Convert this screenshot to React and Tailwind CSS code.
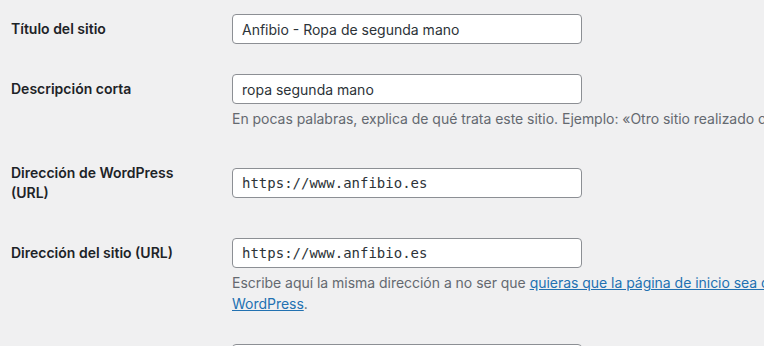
import React from 'react';

// Ajustes generales de WordPress (fragmento)
const FONT = { fontFamily: 'Inter, "Noto Sans", "Liberation Sans", sans-serif' };

const TextField = ({ value, mono = false }) => (
  <input
    type="text"
    defaultValue={value}
    className={`block w-[350px] h-[30px] px-[9px] bg-white border border-[#8c8f94] rounded-[4px] text-[14px] text-[#2c3338] outline-none ${
      mono ? 'font-["DejaVu_Sans_Mono","Liberation_Mono",monospace]' : ''
    }`}
  />
);

const Label = ({ children, className = '' }) => (
  <div className={`w-[221px] shrink-0 pr-[21px] text-[14px] leading-[20px] font-semibold text-[#1d2327] ${className}`}>
    {children}
  </div>
);

const Description = ({ children }) => (
  <p className="mt-[4px] text-[14px] leading-[21px] text-[#646970] whitespace-nowrap tracking-[-0.03px]">{children}</p>
);

export default function App() {
  return (
    <div className="h-[346px] w-[764px] overflow-hidden bg-[#f0f0f1] pl-[11px] pt-[14px]" style={FONT}>
      {/* Título */}
      <div className="flex items-start">
        <Label className="mt-[5px]">Título del sitio</Label>
        <TextField value="Anfibio - Ropa de segunda mano" />
      </div>

      {/* Descripción */}
      <div className="flex items-start mt-[30px]">
        <Label className="mt-[5px]">Descripción corta</Label>
        <div>
          <TextField value="ropa segunda mano" />
          <Description>
            En pocas palabras, explica de qué trata este sitio. Ejemplo: «Otro sitio realizado con WordPress».
          </Description>
        </div>
      </div>

      {/* Dirección de WordPress */}
      <div className="flex items-start mt-[34px]">
        <Label>Dirección de WordPress (URL)</Label>
        <div className="mt-[5px]">
          <TextField value="https://www.anfibio.es" mono />
        </div>
      </div>

      {/* Dirección del sitio */}
      <div className="flex items-start mt-[35px]">
        <Label className="mt-[5px]">Dirección del sitio (URL)</Label>
        <div>
          <TextField value="https://www.anfibio.es" mono />
          <Description>
            Escribe aquí la misma dirección a no ser que{' '}
            <a href="#" className="text-[#2271b1] underline">
              quieras que la página de inicio sea distinta del directorio de instalación de
              <br />
              WordPress
            </a>
            .
          </Description>
        </div>
      </div>

      {/* Siguiente campo (cortado por el borde inferior) */}
      <div className="flex items-start mt-[30px]">
        <Label />
        <TextField value="" />
      </div>
    </div>
  );
}
